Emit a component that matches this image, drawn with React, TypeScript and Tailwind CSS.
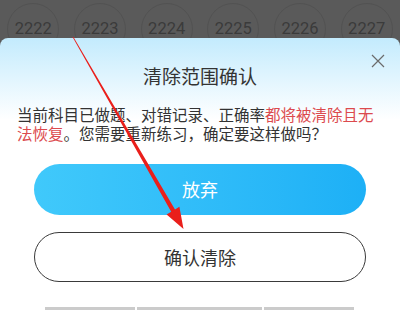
import React from "react";

const numbers = ["2222", "2223", "2224", "2225", "2226", "2227"];

const Arrow = () => (
  <svg
    className="pointer-events-none absolute left-0 top-0"
    width="400"
    height="311"
    viewBox="0 0 400 311"
  >
    <polygon
      points="72.4,36.8 73.6,37.2 175,209.4 179.4,206.8 183.5,229 166.6,214.6 171.2,211.8"
      fill="#ea1f1b"
    />
  </svg>
);

const App = () => {
  return (
    <div
      className="relative h-[311px] w-[400px] overflow-hidden bg-[#5a5a5a]"
      style={{ fontFamily: '"Noto Sans CJK SC", "Noto Sans", sans-serif' }}
    >
      <div className="grid h-[38px] grid-cols-6 overflow-hidden">
        {numbers.map((n) => (
          <div key={n} className="flex justify-center">
            <div className="mt-[3px] flex h-[52px] w-[52px] shrink-0 justify-center rounded-full border border-[#525252] pt-[16px] font-['Roboto',sans-serif] text-[16.5px] leading-[17px] text-[#3b3b3b]">
              {n}
            </div>
          </div>
        ))}
      </div>

      <div className="relative flex h-[273px] flex-col rounded-t-[8px] bg-gradient-to-b from-[#c3ebfd] via-white via-[30%] to-white">
        <button className="absolute right-[15px] top-[16px]">
          <svg width="14" height="14" viewBox="0 0 14 14">
            <path d="M1 1 L13 13 M13 1 L1 13" stroke="#6b6b6b" strokeWidth="1.2" />
          </svg>
        </button>
        <h2 className="mt-[26px] text-center text-[19px] leading-[24px] text-[#333]">
          清除范围确认
        </h2>
        <p className="mt-[17px] px-[17px] text-[15.5px] leading-[19px] text-[#333]">
          当前科目已做题、对错记录、正确率
          <span className="text-[#dc4a4e]">都将被清除且无法恢复</span>
          。您需要重新练习，确定要这样做吗？
        </p>
        <button className="mx-[34px] mt-[21px] flex h-[51px] items-center justify-center rounded-full bg-gradient-to-r from-[#40c9fb] to-[#1db0f6] text-[18px] text-white">
          放弃
        </button>
        <button className="mx-[34px] mt-[17px] flex h-[50px] items-center justify-center rounded-full border border-[#3a3a3a] text-[18px] text-[#333]">
          确认清除
        </button>
        <div className="mt-[25px] flex gap-[2px] pl-[45px]">
          <div className="h-[3px] w-[90px] bg-[#cbcbcb]" />
          <div className="h-[3px] w-[125px] bg-[#cbcbcb]" />
          <div className="h-[3px] w-[90px] bg-[#cbcbcb]" />
        </div>
      </div>

      <Arrow />
    </div>
  );
};

export default App;
